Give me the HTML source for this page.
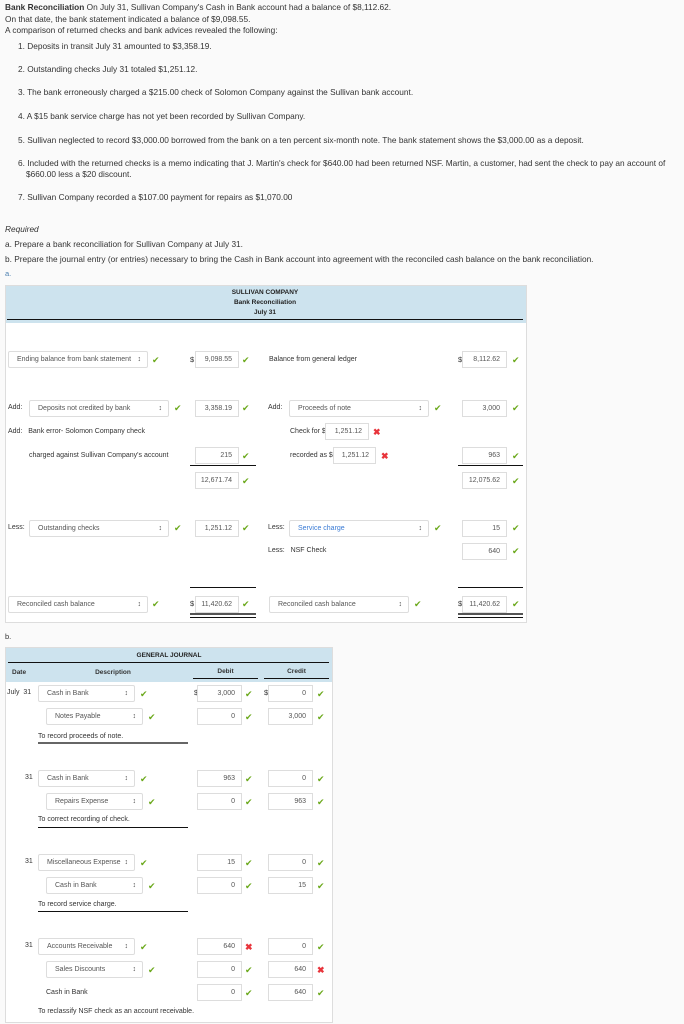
<!DOCTYPE html>
<html><head><meta charset="utf-8"><style>
*{margin:0;padding:0;box-sizing:border-box}
body{width:684px;height:1024px;background:#fafafa;font-family:"Liberation Sans",sans-serif;font-size:7.5px;color:#333;position:relative;overflow:hidden}
.a{position:absolute;white-space:nowrap;line-height:10px}
.top{font-size:8.3px}
.sel{position:absolute;height:17px;border:1px solid #ddd;border-radius:2px;background:#fff;font-size:7px;color:#555;padding-left:8px;line-height:15px;white-space:nowrap}
.sel:after{content:"\2195";position:absolute;right:6px;top:0;font-size:7px;color:#444}
.in{position:absolute;height:17px;border:1px solid #ddd;background:#fff;font-size:7px;color:#555;text-align:right;padding-right:6px;line-height:15px}
.ok{position:absolute;color:#6aa81a;font-size:9px;line-height:10px}
.no{position:absolute;color:#e8343b;font-size:9px;line-height:10px;font-weight:bold}
.ln{position:absolute;height:1px;background:#111}
.p{position:absolute;background:#fff;border:1px solid #ddd}
.h{position:absolute;background:#cde3ee}
</style></head><body>
<div class="a top" style="left:5px;top:2px"><b>Bank Reconciliation</b> On July 31, Sullivan Company's Cash in Bank account had a balance of $8,112.62.</div>
<div class="a top" style="left:5px;top:14px">On that date, the bank statement indicated a balance of $9,098.55.</div>
<div class="a top" style="left:5px;top:25px">A comparison of returned checks and bank advices revealed the following:</div>
<div class="a top" style="left:18px;top:41px">1. Deposits in transit July 31 amounted to $3,358.19.</div>
<div class="a top" style="left:18px;top:64px">2. Outstanding checks July 31 totaled $1,251.12.</div>
<div class="a top" style="left:18px;top:87px">3. The bank erroneously charged a $215.00 check of Solomon Company against the Sullivan bank account.</div>
<div class="a top" style="left:18px;top:111px">4. A $15 bank service charge has not yet been recorded by Sullivan Company.</div>
<div class="a top" style="left:18px;top:135px">5. Sullivan neglected to record $3,000.00 borrowed from the bank on a ten percent six-month note. The bank statement shows the $3,000.00 as a deposit.</div>
<div class="a top" style="left:18px;top:158px">6. Included with the returned checks is a memo indicating that J. Martin's check for $640.00 had been returned NSF. Martin, a customer, had sent the check to pay an account of</div>
<div class="a top" style="left:26px;top:169px">$660.00 less a $20 discount.</div>
<div class="a top" style="left:18px;top:192px">7. Sullivan Company recorded a $107.00 payment for repairs as $1,070.00</div>
<div class="a top" style="left:5px;top:224px;font-style:italic">Required</div>
<div class="a top" style="left:5px;top:239px">a. Prepare a bank reconciliation for Sullivan Company at July 31.</div>
<div class="a top" style="left:5px;top:254px">b. Prepare the journal entry (or entries) necessary to bring the Cash in Bank account into agreement with the reconciled cash balance on the bank reconciliation.</div>
<div class="a" style="left:5px;top:269px;color:#4a7fb0">a.</div>

<div class="p" style="left:5px;top:285px;width:522px;height:338px"></div>
<div class="h" style="left:6px;top:286px;width:520px;height:37px"></div>
<div class="ln" style="left:7px;top:319px;width:516px"></div>
<div class="a" style="left:165px;top:288px;width:200px;text-align:center;font-weight:bold;font-size:6.5px;line-height:10px;color:#222">SULLIVAN COMPANY<br>Bank Reconciliation<br>July 31</div>

<div class="sel" style="left:8px;top:351px;width:140px">Ending balance from bank statement</div><div class="ok" style="left:152px;top:355px">✔</div>
<div class="a" style="left:190px;top:355px">$</div><div class="in" style="left:195px;top:351px;width:44px">9,098.55</div><div class="ok" style="left:242px;top:355px">✔</div>
<div class="a" style="left:269px;top:355px;font-size:7px">Balance from general ledger</div>
<div class="a" style="left:458px;top:355px">$</div><div class="in" style="left:462px;top:351px;width:45px">8,112.62</div><div class="ok" style="left:512px;top:355px">✔</div>

<div class="a" style="left:8px;top:403px;font-size:7px">Add:</div>
<div class="sel" style="left:29px;top:400px;width:140px">Deposits not credited by bank</div><div class="ok" style="left:174px;top:403px">✔</div>
<div class="in" style="left:195px;top:400px;width:44px">3,358.19</div><div class="ok" style="left:242px;top:403px">✔</div>
<div class="a" style="left:268px;top:403px;font-size:7px">Add:</div>
<div class="sel" style="left:289px;top:400px;width:140px">Proceeds of note</div><div class="ok" style="left:434px;top:403px">✔</div>
<div class="in" style="left:462px;top:400px;width:45px">3,000</div><div class="ok" style="left:512px;top:403px">✔</div>

<div class="a" style="left:8px;top:427px;font-size:7px">Add:&nbsp;&nbsp; Bank error- Solomon Company check</div>
<div class="a" style="left:290px;top:427px;font-size:7px">Check for $</div>
<div class="in" style="left:325px;top:423px;width:44px">1,251.12</div><div class="no" style="left:373px;top:427px">✖</div>

<div class="a" style="left:29px;top:451px;font-size:7px">charged against Sullivan Company's account</div>
<div class="in" style="left:195px;top:447px;width:44px">215</div><div class="ok" style="left:242px;top:451px">✔</div>
<div class="a" style="left:290px;top:451px;font-size:7px">recorded as $</div>
<div class="in" style="left:333px;top:447px;width:43px">1,251.12</div><div class="no" style="left:381px;top:451px">✖</div>
<div class="in" style="left:462px;top:447px;width:45px">963</div><div class="ok" style="left:512px;top:451px">✔</div>
<div class="ln" style="left:190px;top:465px;width:66px"></div><div class="ln" style="left:458px;top:465px;width:65px"></div>

<div class="in" style="left:195px;top:472px;width:44px">12,671.74</div><div class="ok" style="left:242px;top:476px">✔</div>
<div class="in" style="left:462px;top:472px;width:45px">12,075.62</div><div class="ok" style="left:512px;top:476px">✔</div>

<div class="a" style="left:8px;top:523px;font-size:7px">Less:</div>
<div class="sel" style="left:29px;top:520px;width:140px">Outstanding checks</div><div class="ok" style="left:174px;top:523px">✔</div>
<div class="in" style="left:195px;top:520px;width:44px">1,251.12</div><div class="ok" style="left:242px;top:523px">✔</div>
<div class="a" style="left:268px;top:523px;font-size:7px">Less:</div>
<div class="sel" style="left:289px;top:520px;width:140px;color:#3a7bd5">Service charge</div><div class="ok" style="left:434px;top:523px">✔</div>
<div class="in" style="left:462px;top:520px;width:45px">15</div><div class="ok" style="left:512px;top:523px">✔</div>
<div class="a" style="left:268px;top:546px;font-size:7px">Less:&nbsp;&nbsp; NSF Check</div>
<div class="in" style="left:462px;top:543px;width:45px">640</div><div class="ok" style="left:512px;top:546px">✔</div>
<div class="ln" style="left:190px;top:587px;width:66px"></div><div class="ln" style="left:458px;top:587px;width:65px"></div>

<div class="sel" style="left:8px;top:596px;width:140px">Reconciled cash balance</div><div class="ok" style="left:152px;top:599px">✔</div>
<div class="a" style="left:190px;top:599px">$</div><div class="in" style="left:195px;top:596px;width:44px">11,420.62</div><div class="ok" style="left:242px;top:599px">✔</div>
<div class="sel" style="left:269px;top:596px;width:140px">Reconciled cash balance</div><div class="ok" style="left:414px;top:599px">✔</div>
<div class="a" style="left:458px;top:599px">$</div><div class="in" style="left:462px;top:596px;width:45px">11,420.62</div><div class="ok" style="left:512px;top:599px">✔</div>
<div class="ln" style="left:190px;top:613px;width:66px;height:2px;background:#555"></div><div class="ln" style="left:190px;top:617px;width:66px"></div>
<div class="ln" style="left:458px;top:613px;width:65px;height:2px;background:#555"></div><div class="ln" style="left:458px;top:617px;width:65px"></div>

<div class="a" style="left:5px;top:632px">b.</div>
<div class="p" style="left:5px;top:647px;width:328px;height:376px"></div>
<div class="h" style="left:6px;top:648px;width:326px;height:34px"></div>
<div class="a" style="left:6px;top:651px;width:326px;text-align:center;font-weight:bold;font-size:6.5px;color:#222">GENERAL JOURNAL</div>
<div class="ln" style="left:8px;top:662px;width:321px"></div>
<div class="a" style="left:12px;top:668px;font-weight:bold;font-size:6.5px">Date</div>
<div class="a" style="left:80px;top:668px;width:66px;text-align:center;font-weight:bold;font-size:6.5px">Description</div>
<div class="a" style="left:193px;top:667px;width:65px;text-align:center;font-weight:bold;font-size:6.5px">Debit</div>
<div class="a" style="left:264px;top:667px;width:65px;text-align:center;font-weight:bold;font-size:6.5px">Credit</div>
<div class="ln" style="left:193px;top:678px;width:65px"></div><div class="ln" style="left:264px;top:678px;width:65px"></div>

<div class="a" style="left:7px;top:688px;font-size:7px">July&nbsp; 31</div>
<div class="sel" style="left:38px;top:685px;width:97px">Cash in Bank</div><div class="ok" style="left:140px;top:689px">✔</div>
<div class="a" style="left:194px;top:688px">$</div><div class="in" style="left:197px;top:685px;width:45px">3,000</div><div class="ok" style="left:245px;top:689px">✔</div>
<div class="a" style="left:264px;top:688px">$</div><div class="in" style="left:268px;top:685px;width:45px">0</div><div class="ok" style="left:317px;top:689px">✔</div>
<div class="sel" style="left:46px;top:708px;width:97px">Notes Payable</div><div class="ok" style="left:148px;top:712px">✔</div>
<div class="in" style="left:197px;top:708px;width:45px">0</div><div class="ok" style="left:245px;top:712px">✔</div>
<div class="in" style="left:268px;top:708px;width:45px">3,000</div><div class="ok" style="left:317px;top:712px">✔</div>
<div class="a" style="left:38px;top:732px;font-size:7px">To record proceeds of note.</div>
<div class="ln" style="left:38px;top:742px;width:150px;height:2px;background:#666"></div>

<div class="a" style="left:25px;top:773px;font-size:7px">31</div>
<div class="sel" style="left:38px;top:770px;width:97px">Cash in Bank</div><div class="ok" style="left:140px;top:774px">✔</div>
<div class="in" style="left:197px;top:770px;width:45px">963</div><div class="ok" style="left:245px;top:774px">✔</div>
<div class="in" style="left:268px;top:770px;width:45px">0</div><div class="ok" style="left:317px;top:774px">✔</div>
<div class="sel" style="left:46px;top:793px;width:97px">Repairs Expense</div><div class="ok" style="left:148px;top:797px">✔</div>
<div class="in" style="left:197px;top:793px;width:45px">0</div><div class="ok" style="left:245px;top:797px">✔</div>
<div class="in" style="left:268px;top:793px;width:45px">963</div><div class="ok" style="left:317px;top:797px">✔</div>
<div class="a" style="left:38px;top:815px;font-size:7px">To correct recording of check.</div>
<div class="ln" style="left:38px;top:827px;width:150px"></div>

<div class="a" style="left:25px;top:857px;font-size:7px">31</div>
<div class="sel" style="left:38px;top:854px;width:97px">Miscellaneous Expense</div><div class="ok" style="left:140px;top:858px">✔</div>
<div class="in" style="left:197px;top:854px;width:45px">15</div><div class="ok" style="left:245px;top:858px">✔</div>
<div class="in" style="left:268px;top:854px;width:45px">0</div><div class="ok" style="left:317px;top:858px">✔</div>
<div class="sel" style="left:46px;top:877px;width:97px">Cash in Bank</div><div class="ok" style="left:148px;top:881px">✔</div>
<div class="in" style="left:197px;top:877px;width:45px">0</div><div class="ok" style="left:245px;top:881px">✔</div>
<div class="in" style="left:268px;top:877px;width:45px">15</div><div class="ok" style="left:317px;top:881px">✔</div>
<div class="a" style="left:38px;top:900px;font-size:7px">To record service charge.</div>
<div class="ln" style="left:38px;top:911px;width:150px"></div>

<div class="a" style="left:25px;top:941px;font-size:7px">31</div>
<div class="sel" style="left:38px;top:938px;width:97px">Accounts Receivable</div><div class="ok" style="left:140px;top:942px">✔</div>
<div class="in" style="left:197px;top:938px;width:45px">640</div><div class="no" style="left:245px;top:942px">✖</div>
<div class="in" style="left:268px;top:938px;width:45px">0</div><div class="ok" style="left:317px;top:942px">✔</div>
<div class="sel" style="left:46px;top:961px;width:97px">Sales Discounts</div><div class="ok" style="left:148px;top:965px">✔</div>
<div class="in" style="left:197px;top:961px;width:45px">0</div><div class="ok" style="left:245px;top:965px">✔</div>
<div class="in" style="left:268px;top:961px;width:45px">640</div><div class="no" style="left:317px;top:965px">✖</div>
<div class="a" style="left:46px;top:988px;font-size:7px">Cash in Bank</div>
<div class="in" style="left:197px;top:984px;width:45px">0</div><div class="ok" style="left:245px;top:988px">✔</div>
<div class="in" style="left:268px;top:984px;width:45px">640</div><div class="ok" style="left:317px;top:988px">✔</div>
<div class="a" style="left:38px;top:1007px;font-size:7px">To reclassify NSF check as an account receivable.</div>
</body></html>
